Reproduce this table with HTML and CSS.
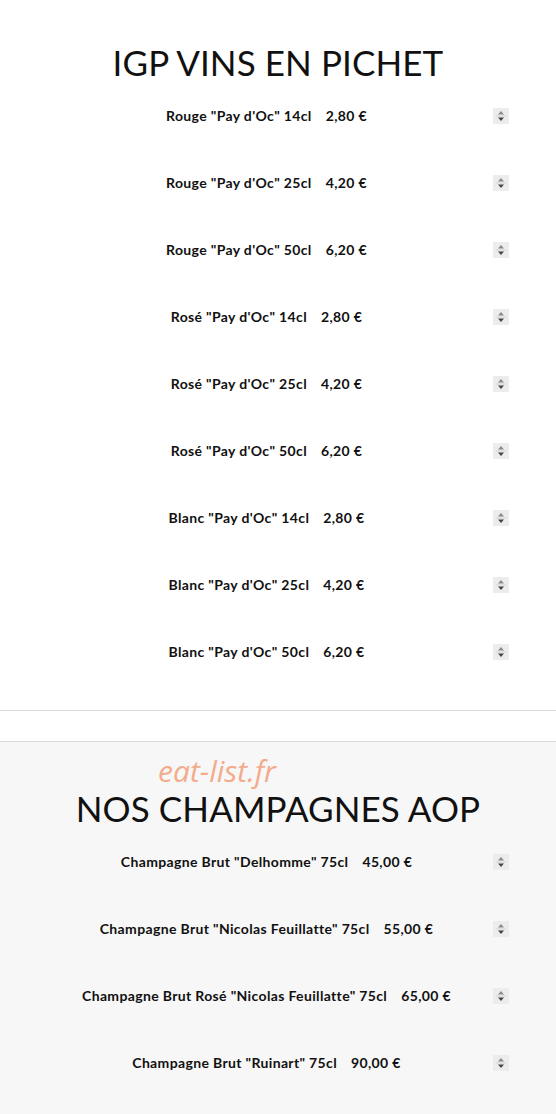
FILE: index.html
```html
<!DOCTYPE html>
<html lang="fr">
<head>
    <meta charset="utf-8"/>
    <meta content="width=device-width, initial-scale=1" name="viewport"/>
    <title>Vins et Champagnes</title>
    <link rel="stylesheet" href="styles.css">
</head>
<body>
    <section class="menu">
        <h2 class="menu-title">IGP VINS EN PICHET</h2>

        <div class="item"><p><span class="name">Rouge "Pay d'Oc" 14cl</span><span class="price">2,80 €</span></p><span class="spin"><svg width="16" height="16" viewBox="0 0 16 16"><path d="M5 6.5 L8 3 L11 6.5 Z" fill="#8a8a8a"/><line x1="3" y1="8" x2="13" y2="8" stroke="#d4d4d4"/><path d="M5 9.5 L8 13 L11 9.5 Z" fill="#444"/></svg></span></div>
        <div class="item"><p><span class="name">Rouge "Pay d'Oc" 25cl</span><span class="price">4,20 €</span></p><span class="spin"><svg width="16" height="16" viewBox="0 0 16 16"><path d="M5 6.5 L8 3 L11 6.5 Z" fill="#8a8a8a"/><line x1="3" y1="8" x2="13" y2="8" stroke="#d4d4d4"/><path d="M5 9.5 L8 13 L11 9.5 Z" fill="#444"/></svg></span></div>
        <div class="item"><p><span class="name">Rouge "Pay d'Oc" 50cl</span><span class="price">6,20 €</span></p><span class="spin"><svg width="16" height="16" viewBox="0 0 16 16"><path d="M5 6.5 L8 3 L11 6.5 Z" fill="#8a8a8a"/><line x1="3" y1="8" x2="13" y2="8" stroke="#d4d4d4"/><path d="M5 9.5 L8 13 L11 9.5 Z" fill="#444"/></svg></span></div>
        <div class="item"><p><span class="name">Rosé "Pay d'Oc" 14cl</span><span class="price">2,80 €</span></p><span class="spin"><svg width="16" height="16" viewBox="0 0 16 16"><path d="M5 6.5 L8 3 L11 6.5 Z" fill="#8a8a8a"/><line x1="3" y1="8" x2="13" y2="8" stroke="#d4d4d4"/><path d="M5 9.5 L8 13 L11 9.5 Z" fill="#444"/></svg></span></div>
        <div class="item"><p><span class="name">Rosé "Pay d'Oc" 25cl</span><span class="price">4,20 €</span></p><span class="spin"><svg width="16" height="16" viewBox="0 0 16 16"><path d="M5 6.5 L8 3 L11 6.5 Z" fill="#8a8a8a"/><line x1="3" y1="8" x2="13" y2="8" stroke="#d4d4d4"/><path d="M5 9.5 L8 13 L11 9.5 Z" fill="#444"/></svg></span></div>
        <div class="item"><p><span class="name">Rosé "Pay d'Oc" 50cl</span><span class="price">6,20 €</span></p><span class="spin"><svg width="16" height="16" viewBox="0 0 16 16"><path d="M5 6.5 L8 3 L11 6.5 Z" fill="#8a8a8a"/><line x1="3" y1="8" x2="13" y2="8" stroke="#d4d4d4"/><path d="M5 9.5 L8 13 L11 9.5 Z" fill="#444"/></svg></span></div>
        <div class="item"><p><span class="name">Blanc "Pay d'Oc" 14cl</span><span class="price">2,80 €</span></p><span class="spin"><svg width="16" height="16" viewBox="0 0 16 16"><path d="M5 6.5 L8 3 L11 6.5 Z" fill="#8a8a8a"/><line x1="3" y1="8" x2="13" y2="8" stroke="#d4d4d4"/><path d="M5 9.5 L8 13 L11 9.5 Z" fill="#444"/></svg></span></div>
        <div class="item"><p><span class="name">Blanc "Pay d'Oc" 25cl</span><span class="price">4,20 €</span></p><span class="spin"><svg width="16" height="16" viewBox="0 0 16 16"><path d="M5 6.5 L8 3 L11 6.5 Z" fill="#8a8a8a"/><line x1="3" y1="8" x2="13" y2="8" stroke="#d4d4d4"/><path d="M5 9.5 L8 13 L11 9.5 Z" fill="#444"/></svg></span></div>
        <div class="item"><p><span class="name">Blanc "Pay d'Oc" 50cl</span><span class="price">6,20 €</span></p><span class="spin"><svg width="16" height="16" viewBox="0 0 16 16"><path d="M5 6.5 L8 3 L11 6.5 Z" fill="#8a8a8a"/><line x1="3" y1="8" x2="13" y2="8" stroke="#d4d4d4"/><path d="M5 9.5 L8 13 L11 9.5 Z" fill="#444"/></svg></span></div>
    </section>

    <hr class="sep">

    <section class="menu grey">
        <p class="watermark">eat-list.fr</p>
        <h2 class="menu-title">NOS CHAMPAGNES AOP</h2>

        <div class="item"><p><span class="name">Champagne Brut "Delhomme" 75cl</span><span class="price">45,00 €</span></p><span class="spin"><svg width="16" height="16" viewBox="0 0 16 16"><path d="M5 6.5 L8 3 L11 6.5 Z" fill="#8a8a8a"/><line x1="3" y1="8" x2="13" y2="8" stroke="#d4d4d4"/><path d="M5 9.5 L8 13 L11 9.5 Z" fill="#444"/></svg></span></div>
        <div class="item"><p><span class="name">Champagne Brut "Nicolas Feuillatte" 75cl</span><span class="price">55,00 €</span></p><span class="spin"><svg width="16" height="16" viewBox="0 0 16 16"><path d="M5 6.5 L8 3 L11 6.5 Z" fill="#8a8a8a"/><line x1="3" y1="8" x2="13" y2="8" stroke="#d4d4d4"/><path d="M5 9.5 L8 13 L11 9.5 Z" fill="#444"/></svg></span></div>
        <div class="item"><p><span class="name">Champagne Brut Rosé "Nicolas Feuillatte" 75cl</span><span class="price">65,00 €</span></p><span class="spin"><svg width="16" height="16" viewBox="0 0 16 16"><path d="M5 6.5 L8 3 L11 6.5 Z" fill="#8a8a8a"/><line x1="3" y1="8" x2="13" y2="8" stroke="#d4d4d4"/><path d="M5 9.5 L8 13 L11 9.5 Z" fill="#444"/></svg></span></div>
        <div class="item"><p><span class="name">Champagne Brut "Ruinart" 75cl</span><span class="price">90,00 €</span></p><span class="spin"><svg width="16" height="16" viewBox="0 0 16 16"><path d="M5 6.5 L8 3 L11 6.5 Z" fill="#8a8a8a"/><line x1="3" y1="8" x2="13" y2="8" stroke="#d4d4d4"/><path d="M5 9.5 L8 13 L11 9.5 Z" fill="#444"/></svg></span></div>
    </section>
</body>
</html>
```
FILE: styles.css
```css
body {
    margin: 0;
    padding: 0;
    font-family: Lato, "Noto Sans", sans-serif;
    background-color: #fff;
    color: #111;
}
.menu {
    padding-top: 42px;
}
.menu-title {
    margin: 0;
    font-size: 35px;
    line-height: 40px;
    font-weight: 400;
    text-align: center;
    letter-spacing: 0.1px;
}
.item {
    display: flex;
    align-items: center;
    height: 67px;
    padding: 0 47px 0 40px;
}
.item p {
    flex: 1;
    margin: 0;
    text-align: center;
    font-size: 14px;
    font-weight: 700;
    letter-spacing: 0.35px;
}
.price {
    margin-left: 14px;
}
.spin {
    width: 16px;
    height: 16px;
    background-color: #ececec;
    display: flex;
}
.sep {
    margin: 25px 0 30px;
    border: 0;
    border-top: 1px solid #dcdcdc;
}
.grey {
    background-color: #f7f7f7;
    border-top: 1px solid #dcdcdc;
    padding-top: 14px;
    min-height: 400px;
}
.watermark {
    margin: 0 0 2px;
    padding-left: 158px;
    font-family: "Open Sans", sans-serif;
    font-style: italic;
    font-size: 30px;
    line-height: 30px;
    color: #f3ab8c;
}
```
